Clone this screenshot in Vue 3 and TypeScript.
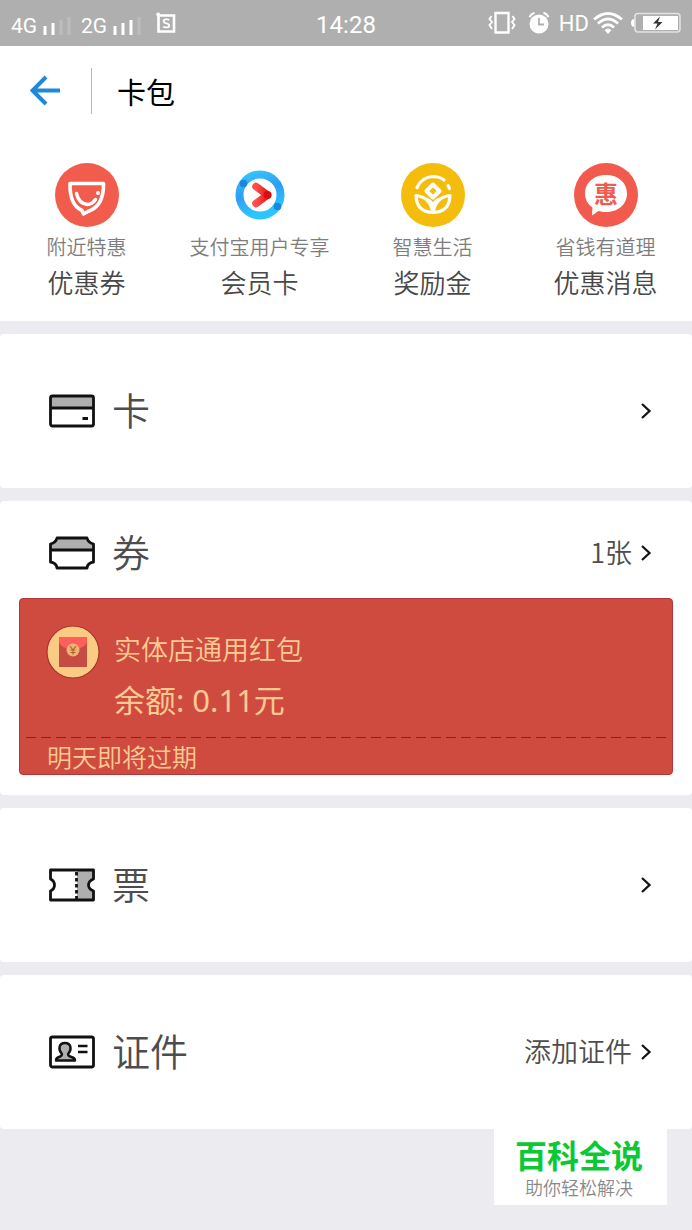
<script setup lang="ts">
interface Shortcut {
  icon: 'bowl' | 'member' | 'lotus' | 'message'
  hint: string
  title: string
}

const shortcuts: Shortcut[] = [
  { icon: 'bowl', hint: '附近特惠', title: '优惠券' },
  { icon: 'member', hint: '支付宝用户专享', title: '会员卡' },
  { icon: 'lotus', hint: '智慧生活', title: '奖励金' },
  { icon: 'message', hint: '省钱有道理', title: '优惠消息' },
]

interface Section {
  id: 'card' | 'coupon' | 'ticket' | 'identity'
  label: string
  extra?: string
}

const sections: Section[] = [
  { id: 'card', label: '卡' },
  { id: 'coupon', label: '券', extra: '1张' },
  { id: 'ticket', label: '票' },
  { id: 'identity', label: '证件', extra: '添加证件' },
]

const coupon = { name: '实体店通用红包', balance: '余额: 0.11元', notice: '明天即将过期' }
</script>

<template>
  <div class="page">
    <div class="status">
      <div class="status-side">
        <span class="net">4G</span>
        <svg class="signal" width="28" height="18" viewBox="0 0 28 18">
          <path d="M2 9v9M10 6v12" stroke="#fff" stroke-width="3" />
          <path d="M18 3v15M26 0v18" stroke="#bdbdbd" stroke-width="3" />
        </svg>
        <span class="net second">2G</span>
        <svg class="signal" width="28" height="18" viewBox="0 0 28 18">
          <path d="M2 9v9M10 6v12M18 3v15" stroke="#fff" stroke-width="3" />
          <path d="M26 0v18" stroke="#bdbdbd" stroke-width="3" />
        </svg>
        <svg class="app-mark" width="20" height="22" viewBox="0 0 20 22">
          <path d="M2.500 3.500h15.500v16H2.500z" fill="none" stroke="#fff" stroke-width="2.600" />
          <circle cx="2.200" cy="2.600" r="2" fill="#fff" />
          <path d="M13.200 8.200c-1-1.300-5.600-1.500-5.600 1.100 0 2.700 5.700 1.500 5.700 4.200 0 2.500-5 2.400-6.100.9" fill="none" stroke="#fff" stroke-width="1.700" />
        </svg>
      </div>
      <span class="clock">14:28</span>
      <div class="status-side right">
        <svg width="28" height="24" viewBox="0 0 28 24">
          <path d="M7.500 2h13v19.500h-13z" fill="none" stroke="#fff" stroke-width="2.400" />
          <path d="M3.500 5 1.500 8l2.500 3-2.500 3 2.500 4M24.500 5l2 3-2.500 3 2.500 3-2.500 4" fill="none" stroke="#fff" stroke-width="1.900" />
        </svg>
        <svg class="alarm" width="22" height="24" viewBox="0 0 22 24">
          <circle cx="11" cy="13" r="9.500" fill="#fff" />
          <path d="M1.500 6Q3 3 6.500 1.800M20.500 6Q19 3 15.500 1.800" fill="none" stroke="#fff" stroke-width="2" />
          <path d="M11 7v6.500h5" fill="none" stroke="#afafaf" stroke-width="1.800" />
        </svg>
        <span class="hd">HD</span>
        <svg class="wifi" width="30" height="24" viewBox="0 0 30 24">
          <path d="M1 8.500Q15-3.500 29 8.500M5 12.500Q15 3.500 25 12.500M9 16.500Q15 11 21 16.500" fill="none" stroke="#fff" stroke-width="2.800" />
          <path d="M11.500 19Q15 16 18.500 19L15 23z" fill="#fff" />
        </svg>
        <svg class="battery" width="50" height="22" viewBox="0 0 50 22">
          <path d="M3.500 7v8Q0 15 0 11t3.500-4z" fill="#fff" />
          <rect x="4" y="1.500" width="45" height="18.500" rx="3" fill="none" stroke="#e2e2e2" stroke-width="1.600" />
          <path d="M12 4h35v14H12z" fill="#fff" />
          <path d="m29 4.500-7 7h4.500l-2.500 6 7.500-7.500h-4.500z" fill="#333" />
        </svg>
      </div>
    </div>

    <header class="top">
      <button class="back" type="button" aria-label="返回">
        <svg width="32" height="32" viewBox="0 0 32 32">
          <path d="M30 15.500H3M16 2 2.500 15.500 16 29" fill="none" stroke="#1e88dd" stroke-width="4" />
        </svg>
      </button>
      <h1>卡包</h1>
    </header>

    <nav class="shortcuts">
      <button v-for="item in shortcuts" :key="item.title" class="shortcut" type="button">
        <svg v-if="item.icon === 'bowl'" width="64" height="64" viewBox="0 0 64 64">
          <circle cx="32" cy="32" r="32" fill="#f25c4d" />
          <path d="M15 20.500H48.500Q49 43 33 48.500l-4.500 2.500-1.500-3.500Q14.500 42 15 20.500z" fill="none" stroke="#fff" stroke-width="3.600" stroke-linejoin="round" />
          <path d="M21.500 30.500Q24 41 32.500 41.500q4.500 0 8-5" fill="none" stroke="#fff" stroke-width="3.400" stroke-linecap="round" />
          <circle cx="43" cy="30" r="2" fill="#fff" />
        </svg>
        <svg v-else-if="item.icon === 'member'" width="64" height="64" viewBox="0 0 64 64">
          <defs>
            <linearGradient id="ring" x1="0" y1="0" x2="0.300" y2="1">
              <stop offset="0" stop-color="#35c6fb" />
              <stop offset="0.500" stop-color="#2f9df3" />
              <stop offset="1" stop-color="#2cc6ff" />
            </linearGradient>
            <linearGradient id="arrow" x1="0" y1="0" x2="1" y2="0">
              <stop offset="0" stop-color="#fb5149" />
              <stop offset="1" stop-color="#e51a1c" />
            </linearGradient>
          </defs>
          <circle cx="32" cy="32" r="20.500" fill="none" stroke="url(#ring)" stroke-width="8" />
          <circle cx="15.500" cy="20.500" r="3.800" fill="#1b87e0" />
          <circle cx="49.500" cy="43.500" r="3.800" fill="#1b87e0" />
          <path d="m28 23.500 11.500 8.500L28 40.500" fill="none" stroke="url(#arrow)" stroke-width="7.500" stroke-linecap="round" stroke-linejoin="round" />
          <circle cx="39.500" cy="32" r="4" fill="#d90c14" />
        </svg>
        <svg v-else-if="item.icon === 'lotus'" width="64" height="64" viewBox="0 0 64 64">
          <circle cx="32" cy="32" r="32" fill="#f4bd0c" />
          <g fill="none" stroke="#fff" stroke-width="3.200" stroke-linecap="round" stroke-linejoin="round">
            <path d="M16 24.500Q21 14 32 13.500q6.500 0 11 3.500" />
            <path d="m47 22.500 1.500 3" />
            <path d="m32 21.500 6.500 6.500-6.500 6.500-6.500-6.500z" stroke-width="4" />
            <path d="M32 49.500Q15.500 49 15 32.500 29 34 32 49.500 35 34 49 32.500 48.500 49 32 49.500zM24.500 36Q30 37 32 43 34 37 39.500 36" />
          </g>
        </svg>
        <svg v-else width="64" height="64" viewBox="0 0 64 64">
          <circle cx="32" cy="32" r="32" fill="#f25a4e" />
          <path d="M32 12c12 0 21 7.500 21 18.500S44 49 32 49c-3 0-5.500-.5-7.500-1L18 52.500l.5-8C14 41.500 11 36.500 11 30.500 11 19.500 20 12 32 12z" fill="#fff" />
          <text class="badge-char" x="32" y="40" text-anchor="middle">惠</text>
        </svg>
        <span class="hint">{{ item.hint }}</span>
        <span class="name">{{ item.title }}</span>
      </button>
    </nav>

    <main class="sections">
      <section v-for="section in sections" :key="section.id" class="section">
        <button class="row" :class="{ compact: section.id === 'coupon' }" type="button">
          <svg width="46" height="34" viewBox="0 0 46 34" fill="none" stroke="#111" stroke-width="2.800" stroke-linejoin="round">
            <template v-if="section.id === 'card'">
              <path d="M2 2h42v11H2z" fill="#afafaf" stroke="none" />
              <rect x="1.500" y="2" width="43" height="30" rx="2" />
              <path d="M2 14h42M33.500 24.500H39" />
            </template>
            <template v-else-if="section.id === 'coupon'">
              <path d="M8 2h30q0 4.500 6.500 6v6h-43V8Q8 6.500 8 2z" fill="#afafaf" stroke="none" />
              <path d="M8 2h30q1 4.500 6.500 6v18q-6 1-6.500 6H8q-.5-5-6.500-6V8Q7 6.500 8 2zM2 14h42" />
            </template>
            <template v-else-if="section.id === 'ticket'">
              <path d="M28 2h16.500v9q-5 2-5 6t5 6v9H28z" fill="#afafaf" stroke="none" />
              <path d="M1.500 2h43v9q-5 2-5 6t5 6v9h-43v-9q4-2 4-6t-4-6z" />
              <path d="M27.500 4v27" stroke-dasharray="3.500 2.500" />
            </template>
            <template v-else>
              <rect x="1.500" y="2" width="43" height="30" rx="2" />
              <path d="M13 19c-4-4-3.500-11 3-11s7 7 3 11q0 2 3.500 3 3.500 1 3.500 3.500H7q0-2.500 3-3.500 3-1 3-3z" fill="#afafaf" stroke-width="2.400" />
              <path d="M29 11h9.500M29 17h9.500" stroke-width="2.600" />
            </template>
          </svg>
          <span class="label">{{ section.label }}</span>
          <span v-if="section.extra" class="extra">{{ section.extra }}</span>
          <svg class="chevron" width="12" height="18" viewBox="0 0 12 18">
            <path d="m2 2 7.500 7L2 16" fill="none" stroke="#151515" stroke-width="2.300" />
          </svg>
        </button>

        <article v-if="section.id === 'coupon'" class="coupon">
          <div class="coupon-body">
            <svg width="54" height="54" viewBox="0 0 54 54">
              <circle cx="27" cy="27" r="26" fill="#fbcb83" stroke="#a83529" stroke-width="1.200" />
              <path d="M13 12h28v30H13z" fill="#c54c43" />
              <path d="M13 12h28v5q-2 7-14 7t-14-7z" fill="#fe5f5c" />
              <circle cx="27" cy="25" r="6.500" fill="#edb572" />
              <path d="m24 21 3 4 3-4M27 25v4.500M24.500 25h5M24.500 27.500h5" fill="none" stroke="#a8643a" stroke-width="1.200" />
            </svg>
            <div class="coupon-text">
              <span class="coupon-name">{{ coupon.name }}</span>
              <span class="coupon-balance">{{ coupon.balance }}</span>
            </div>
          </div>
          <div class="divider">
            <svg width="100%" height="1">
              <path d="M0 .5h2000" stroke="#a31519" stroke-dasharray="10 5" />
            </svg>
          </div>
          <p class="coupon-notice">{{ coupon.notice }}</p>
        </article>
      </section>
    </main>

    <footer class="brand">
      <strong>百科全说</strong>
      <span>助你轻松解决</span>
    </footer>
  </div>
</template>

<style>
body {
  margin: 0;
  background: #ecebf0;
}
</style>

<style scoped>
.page {
  min-height: 100vh;
  display: flex;
  flex-direction: column;
  background: #ecebf0;
  color: #4d4d4d;
  font-family: "Noto Sans CJK SC", "Noto Sans", sans-serif;
  font-weight: 350;
}

svg {
  display: block;
  flex: none;
}

button {
  margin: 0;
  padding: 0;
  border: 0;
  background: none;
  color: inherit;
  font: inherit;
  cursor: pointer;
}

.status {
  height: 46px;
  display: grid;
  grid-template-columns: 1fr auto 1fr;
  align-items: center;
  padding: 0 11px;
  background: #afafaf;
  color: #fff;
  font-family: Roboto, sans-serif;
  font-weight: 400;
  line-height: 24px;
}

.status-side {
  display: flex;
  align-items: center;
}

.status-side.right {
  justify-content: flex-end;
}

.net {
  width: 26px;
  padding-top: 6px;
  font-size: 21px;
}

.signal {
  margin: 6px 0 0 6px;
}

.second {
  margin-left: 10px;
}

.app-mark {
  margin-left: 15px;
}

.clock {
  padding-top: 4px;
  font-size: 24px;
}

.alarm {
  margin-left: 12px;
}

.hd {
  margin-left: 9px;
  padding-top: 2px;
  font-size: 22px;
}

.wifi {
  margin-left: 4px;
}

.battery {
  margin-left: 8px;
}

.top {
  display: flex;
  align-items: center;
  height: 46px;
  padding: 22px 30px;
  background: #fff;
}

.back {
  padding-right: 29px;
}

h1 {
  margin: 0;
  padding-left: 25px;
  border-left: 1px solid #b8b8b8;
  color: #000;
  font-size: 29px;
  font-weight: 400;
  line-height: 46px;
}

.shortcuts {
  display: grid;
  grid-template-columns: repeat(4, 1fr);
  padding: 27px 0 21px;
  background: #fff;
}

.shortcut {
  display: flex;
  flex-direction: column;
  align-items: center;
}

.hint {
  margin-top: 4px;
  color: #7d7d7d;
  font-size: 20px;
  line-height: 32px;
}

.name {
  color: #484848;
  font-size: 26px;
  line-height: 37px;
}

.badge-char {
  fill: #f25a4e;
  font-size: 24px;
  font-weight: 700;
}

.sections {
  display: grid;
  gap: 13px;
  padding-top: 13px;
}

.section {
  border-radius: 4px;
  background: #fff;
}

.row {
  width: 100%;
  min-height: 154px;
  display: flex;
  align-items: center;
  padding: 0 40px 0 49px;
}

.row.compact {
  min-height: 97px;
  padding-top: 7px;
}

.label {
  flex: 1;
  padding: 0 0 4px 17px;
  text-align: left;
  font-size: 38px;
  line-height: 44px;
}

.extra {
  padding-bottom: 2px;
  font-size: 27px;
  line-height: 36px;
}

.chevron {
  margin-left: 8px;
}

.section:has(.coupon) {
  padding-bottom: 20px;
}

.coupon {
  margin: 0 19px;
  border: 1px solid #b5363a;
  border-radius: 4px;
  background: #d04b3f;
  color: #fbca94;
}

.coupon-body {
  display: flex;
  align-items: flex-start;
  padding: 26px 26px 14px;
}

.coupon-text {
  display: flex;
  flex-direction: column;
  gap: 6px;
  padding-left: 14px;
}

.coupon-name {
  font-size: 27px;
  line-height: 47px;
}

.coupon-balance {
  font-family: "Noto Sans", "Noto Sans CJK SC", sans-serif;
  font-size: 31px;
  font-weight: 400;
  line-height: 45px;
}

.divider {
  margin: 0 6px;
}

.coupon-notice {
  margin: 0;
  padding: 0 27px;
  font-size: 25px;
  line-height: 36px;
}

.brand {
  align-self: flex-end;
  display: flex;
  flex-direction: column;
  align-items: center;
  margin-right: 25px;
  padding: 1px 24px 8px 21px;
  background: #fff;
}

.brand strong {
  color: #0bc936;
  font-size: 32px;
  font-weight: 700;
  line-height: 48px;
}

.brand span {
  color: #898989;
  font-size: 18px;
  line-height: 19px;
}
</style>
